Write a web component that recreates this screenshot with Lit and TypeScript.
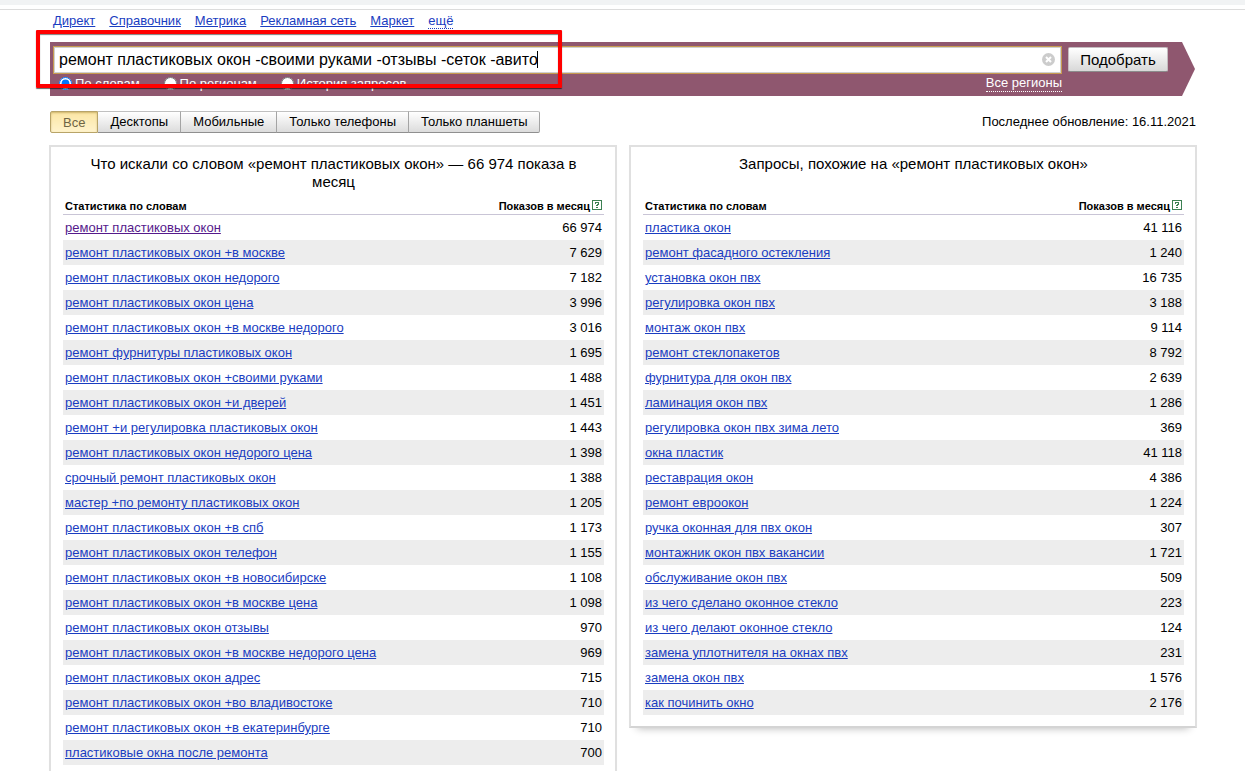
import { LitElement, html, css } from "lit";
import { customElement, property, state } from "lit/decorators.js";

type Row = [string, string];

const WORDS: Row[] = [
  ["ремонт пластиковых окон", "66 974"],
  ["ремонт пластиковых окон +в москве", "7 629"],
  ["ремонт пластиковых окон недорого", "7 182"],
  ["ремонт пластиковых окон цена", "3 996"],
  ["ремонт пластиковых окон +в москве недорого", "3 016"],
  ["ремонт фурнитуры пластиковых окон", "1 695"],
  ["ремонт пластиковых окон +своими руками", "1 488"],
  ["ремонт пластиковых окон +и дверей", "1 451"],
  ["ремонт +и регулировка пластиковых окон", "1 443"],
  ["ремонт пластиковых окон недорого цена", "1 398"],
  ["срочный ремонт пластиковых окон", "1 388"],
  ["мастер +по ремонту пластиковых окон", "1 205"],
  ["ремонт пластиковых окон +в спб", "1 173"],
  ["ремонт пластиковых окон телефон", "1 155"],
  ["ремонт пластиковых окон +в новосибирске", "1 108"],
  ["ремонт пластиковых окон +в москве цена", "1 098"],
  ["ремонт пластиковых окон отзывы", "970"],
  ["ремонт пластиковых окон +в москве недорого цена", "969"],
  ["ремонт пластиковых окон адрес", "715"],
  ["ремонт пластиковых окон +во владивостоке", "710"],
  ["ремонт пластиковых окон +в екатеринбурге", "710"],
  ["пластиковые окна после ремонта", "700"],
];

const SIMILAR: Row[] = [
  ["пластика окон", "41 116"],
  ["ремонт фасадного остекления", "1 240"],
  ["установка окон пвх", "16 735"],
  ["регулировка окон пвх", "3 188"],
  ["монтаж окон пвх", "9 114"],
  ["ремонт стеклопакетов", "8 792"],
  ["фурнитура для окон пвх", "2 639"],
  ["ламинация окон пвх", "1 286"],
  ["регулировка окон пвх зима лето", "369"],
  ["окна пластик", "41 118"],
  ["реставрация окон", "4 386"],
  ["ремонт евроокон", "1 224"],
  ["ручка оконная для пвх окон", "307"],
  ["монтажник окон пвх вакансии", "1 721"],
  ["обслуживание окон пвх", "509"],
  ["из чего сделано оконное стекло", "223"],
  ["из чего делают оконное стекло", "124"],
  ["замена уплотнителя на окнах пвх", "231"],
  ["замена окон пвх", "1 576"],
  ["как починить окно", "2 176"],
];

@customElement("stat-panel")
export class StatPanel extends LitElement {
  @property() heading = "";
  @property({ attribute: false }) rows: Row[] = [];
  @property() visited = "";

  static styles = css`
    :host {
      display: block;
      box-sizing: border-box;
      border: 2px solid #e0e0e0;
      border-bottom-color: #d4d4d4;
      box-shadow: 0 8px 8px -8px rgba(0, 0, 0, 0.3);
      padding: 8px 11px 11px 12px;
      background: #fff;
    }
    .title {
      margin: 0;
      padding: 0 16px;
      min-height: 36px;
      font-size: 15px;
      line-height: 18px;
      font-weight: normal;
      text-align: center;
    }
    .table {
      width: 100%;
      border-collapse: separate;
      border-spacing: 0;
      font-size: 13px;
    }
    .table th {
      box-sizing: border-box;
      height: 24px;
      padding: 7px 2px 0;
      border-bottom: 1px solid #c9c5d6;
      font-size: 11px;
      line-height: 16px;
      text-align: left;
      white-space: nowrap;
    }
    .table td {
      height: 25px;
      padding: 0 2px;
      line-height: 25px;
    }
    .table tbody tr:nth-child(even) {
      background: #ededed;
    }
    .table .num {
      text-align: right;
      white-space: nowrap;
    }
    .link {
      color: #1a3dc1;
      font-size: 13px;
    }
    .link.visited {
      color: #551a8b;
    }
    .help {
      display: inline-block;
      vertical-align: top;
      width: 10px;
      height: 10px;
      margin: 2px 0 0 2px;
      padding: 0;
      border: 0;
      background: none;
    }
    .help svg {
      display: block;
    }
  `;

  render() {
    return html`
      <h2 class="title">${this.heading}</h2>
      <table class="table">
        <thead>
          <tr>
            <th>Статистика по словам</th>
            <th class="num">Показов в месяц<button class="help" aria-label="Справка">
              <svg width="10" height="10" viewBox="0 0 10 10" shape-rendering="crispEdges">
                <rect x="0.5" y="0.5" width="9" height="9" fill="#fff" stroke="#3c8052"></rect>
                <path d="M3 2h4v1h-4zM6 3h1v1h-1zM5 4h2v1h-2zM4 5h2v1h-2zM4 7h2v1h-2zM3 3h1v1h-1z" fill="#3c8052"></path>
              </svg></button></th>
          </tr>
        </thead>
        <tbody>
          ${this.rows.map(
            ([text, count]) => html`<tr>
              <td><a class="link ${text === this.visited ? "visited" : ""}" href="#">${text}</a></td>
              <td class="num">${count}</td>
            </tr>`
          )}
        </tbody>
      </table>
    `;
  }
}

@customElement("app-root")
export class AppRoot extends LitElement {
  @state() private tab = 0;

  static styles = css`
    :host {
      display: block;
      height: 100vh;
      overflow: hidden;
      background: #fff;
      color: #000;
      font: 13px/16px "Liberation Sans", Arial, sans-serif;
    }
    .chrome {
      height: 5px;
      margin-bottom: 4px;
      background: #f1f3f4;
    }
    .page {
      border-top: 1px solid #dcdcdc;
      padding: 3px 48px 0 49px;
    }
    .nav {
      display: flex;
      gap: 14px;
      padding-left: 4px;
    }
    .nav a {
      color: #1a3dc1;
    }
    .nav .more {
      text-decoration: none;
      line-height: 15px;
      border-bottom: 1px dotted #1a3dc1;
    }
    .search {
      display: grid;
      grid-template-columns: 1fr 100px;
      column-gap: 6px;
      align-content: start;
      box-sizing: border-box;
      height: 54px;
      margin: 13px 2px 0 1px;
      padding: 4px 27px 0 3px;
      background: #8f576f;
      clip-path: polygon(0 0, calc(100% - 13px) 0, 100% 50%, calc(100% - 13px) 100%, 0 100%);
    }
    .field {
      position: relative;
    }
    .query {
      display: block;
      box-sizing: border-box;
      width: 100%;
      height: 28px;
      padding: 0 30px 0 5px;
      border: 1px solid #c79a50;
      outline: 0;
      box-shadow: inset 0 0 0 1px #d0d0d0;
      background: #fff;
      color: #000;
      font: 16px/24px "Liberation Sans", Arial, sans-serif;
    }
    .caret {
      position: absolute;
      left: 484px;
      top: 5px;
      width: 1px;
      height: 17px;
      background: #000;
    }
    .clear {
      position: absolute;
      right: 7px;
      top: 7px;
      width: 13px;
      height: 13px;
      padding: 0;
      border: 0;
      background: none;
    }
    .clear svg {
      display: block;
    }
    .submit {
      box-sizing: border-box;
      height: 25px;
      margin-top: 1px;
      padding: 0;
      border: 1px solid #c4bcc0;
      border-bottom-color: #8c8c8c;
      border-radius: 2px;
      background: linear-gradient(#fff, #d8d8d8);
      color: #000;
      font: 15px/22px "Liberation Sans", Arial, sans-serif;
    }
    .options {
      display: flex;
      gap: 24px;
      padding: 1px 0 0 6px;
      color: #fff;
    }
    .options label {
      display: flex;
      align-items: center;
      gap: 3px;
    }
    .options input {
      width: 13px;
      height: 13px;
      margin: 0;
    }
    .regions {
      margin-left: auto;
      align-self: start;
      color: #fff;
      text-decoration: none;
      line-height: 16px;
      border-bottom: 1px dotted #fff;
    }
    .frame {
      position: absolute;
      left: 36px;
      top: 30px;
      box-sizing: border-box;
      width: 526px;
      height: 58px;
      border: 4px solid #f00;
      border-radius: 1px;
      box-shadow: 0 1px 1px rgba(0, 0, 0, 0.6), inset 0 1px 1px rgba(0, 0, 0, 0.5);
      pointer-events: none;
    }
    .bar {
      display: flex;
      justify-content: space-between;
      align-items: center;
      margin: 15px 1px 0 1px;
    }
    .tabs {
      display: flex;
    }
    .tab {
      box-sizing: border-box;
      height: 22px;
      padding: 0 12px 1px;
      border: 1px solid #c0c0c0;
      border-bottom-color: #8f8f8f;
      border-left: 0;
      border-right-color: #a4a4a4;
      background: linear-gradient(#fff, #dcdcdc);
      color: #000;
      font: 13px/19px "Liberation Sans", Arial, sans-serif;
    }
    .tab:first-child {
      border-left: 1px solid #b8a468;
      border-radius: 2px 0 0 2px;
    }
    .tab:last-child {
      border-radius: 0 2px 2px 0;
    }
    .tab.active {
      padding: 1px 12px 0;
      border-color: #b8a468;
      background: linear-gradient(#fbe6a4, #fff3cc);
      box-shadow: inset 0 1px 2px rgba(120, 90, 0, 0.35);
      color: #6f6545;
    }
    .columns {
      display: grid;
      grid-template-columns: 1fr 1fr;
      align-items: start;
      gap: 12px;
      margin-top: 12px;
    }
    .long {
      padding-bottom: 40px;
    }
  `;

  render() {
    const tabs = ["Все", "Десктопы", "Мобильные", "Только телефоны", "Только планшеты"];
    return html`
      <div class="chrome"></div>
      <div class="page">
        <nav class="nav">
          ${["Директ", "Справочник", "Метрика", "Рекламная сеть", "Маркет"].map(
            (t) => html`<a href="#">${t}</a>`
          )}
          <a class="more" href="#">ещё</a>
        </nav>
        <form class="search" @submit=${(e: Event) => e.preventDefault()}>
          <div class="field">
            <input
              class="query"
              aria-label="Запрос"
              .value=${"ремонт пластиковых окон -своими руками -отзывы -сеток -авито"}
            />
            <span class="caret"></span>
            <button class="clear" type="button" aria-label="Очистить">
              <svg width="13" height="13" viewBox="0 0 13 13">
                <circle cx="6.5" cy="6.5" r="6.5" fill="#ccc"></circle>
                <path d="M4 4l5 5M9 4l-5 5" stroke="#fff" stroke-width="2"></path>
              </svg>
            </button>
          </div>
          <button class="submit">Подобрать</button>
          <div class="options">
            <label><input type="radio" name="mode" checked />По словам</label>
            <label><input type="radio" name="mode" />По регионам</label>
            <label><input type="radio" name="mode" />История запросов</label>
            <a class="regions" href="#">Все регионы</a>
          </div>
        </form>
        <div class="bar">
          <div class="tabs">
            ${tabs.map(
              (t, i) => html`<button
                class="tab ${i === this.tab ? "active" : ""}"
                @click=${() => (this.tab = i)}
              >${t}</button>`
            )}
          </div>
          <span>Последнее обновление: 16.11.2021</span>
        </div>
        <div class="columns">
          <stat-panel
            class="long"
            heading="Что искали со словом «ремонт пластиковых окон» — 66 974 показа в месяц"
            visited="ремонт пластиковых окон"
            .rows=${WORDS}
          ></stat-panel>
          <stat-panel heading="Запросы, похожие на «ремонт пластиковых окон»" .rows=${SIMILAR}></stat-panel>
        </div>
      </div>
      <div class="frame"></div>
    `;
  }
}
